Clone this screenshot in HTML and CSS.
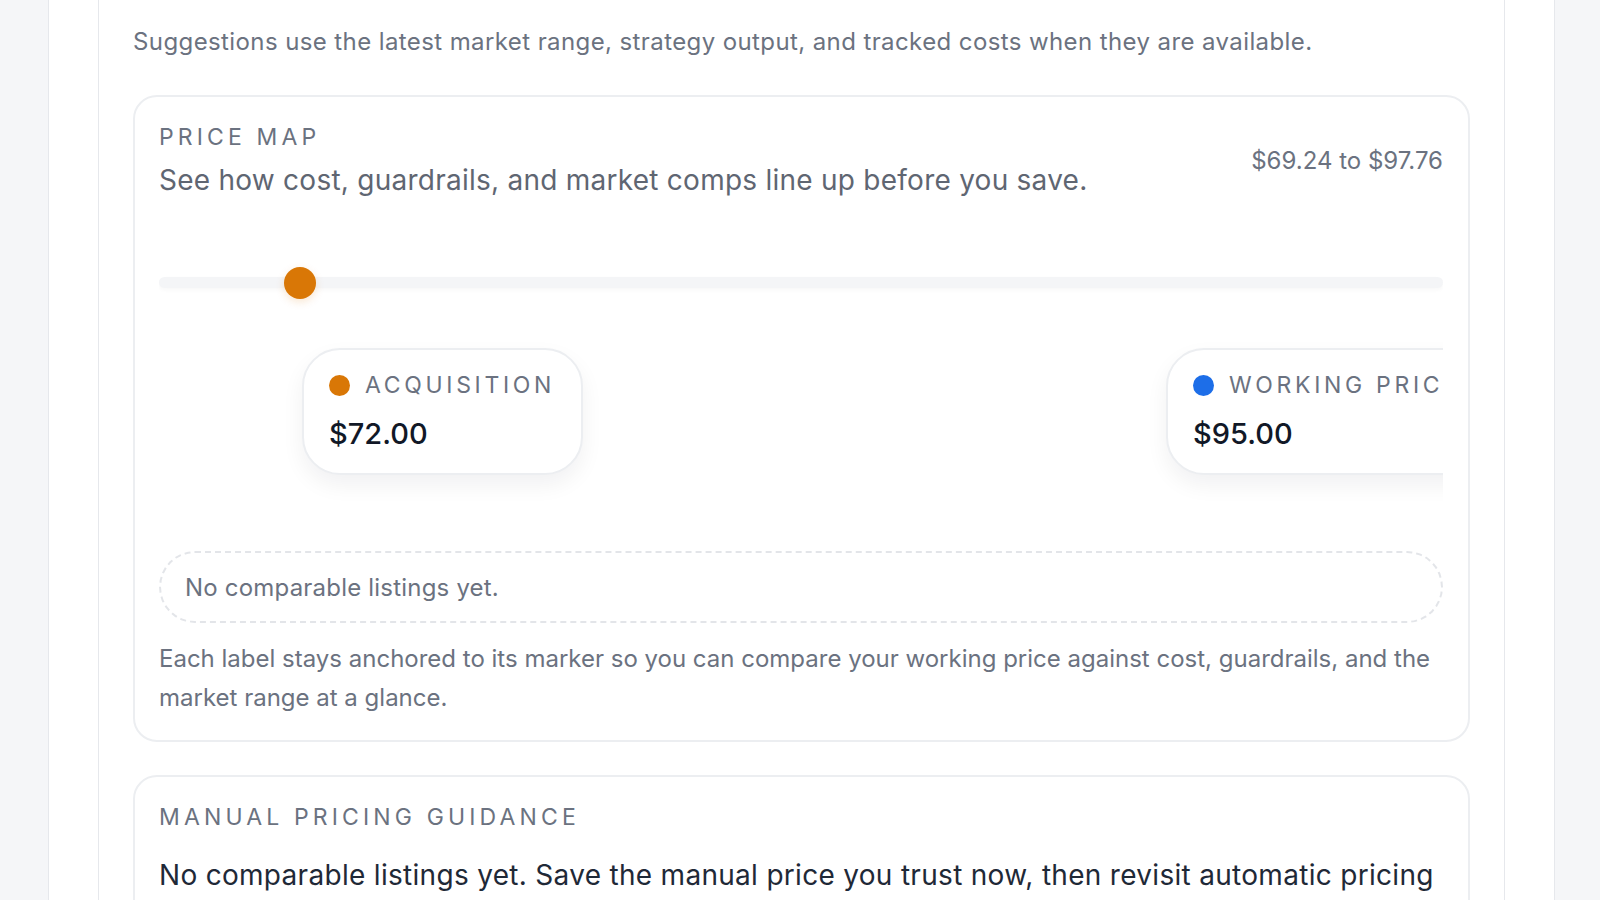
FILE: index.html
```html
<!DOCTYPE html>
<html lang="en">
<head>
<meta charset="utf-8">
<title>Price map</title>
<link rel="stylesheet" href="styles.css">
</head>
<body>
<div class="page">
  <div class="panel">
    <section class="section">
      <p class="intro">Suggestions use the latest market range, strategy output, and tracked costs when they are available.</p>

      <div class="card price-map">
        <div class="map-head">
          <div class="map-titles">
            <div class="eyebrow">Price map</div>
            <div class="map-title">See how cost, guardrails, and market comps line up before you save.</div>
          </div>
          <div class="range">$69.24 to $97.76</div>
        </div>

        <div class="plot">
          <div class="track"></div>
          <div class="marker marker-orange" style="left: 125px"></div>
          <div class="tag" style="left: 143px">
            <div class="tag-label"><span class="dot dot-orange"></span>Acquisition</div>
            <div class="tag-value">$72.00</div>
          </div>
          <div class="tag" style="left: 1007px">
            <div class="tag-label"><span class="dot dot-blue"></span>Working price</div>
            <div class="tag-value">$95.00</div>
          </div>
        </div>

        <div class="empty">No comparable listings yet.</div>
        <p class="note">Each label stays anchored to its marker so you can compare your working price against cost, guardrails, and the market range at a glance.</p>
      </div>

      <div class="card guidance">
        <div class="eyebrow">Manual pricing guidance</div>
        <p class="guidance-text">No comparable listings yet. Save the manual price you trust now, then revisit automatic pricing once market data arrives.</p>
      </div>
    </section>
  </div>
</div>
</body>
</html>
```

FILE: styles.css
```css
* { box-sizing: border-box; }

html, body {
  margin: 0;
  padding: 0;
  height: 100%;
  overflow: hidden;
}

body {
  background: #f5f6f8;
  font-family: Inter, "Noto Sans", "Liberation Sans", sans-serif;
  color: #6b7280;
}

.page {
  padding: 0 45px 0 48px;
  height: 100%;
}

.panel {
  background: #ffffff;
  border-left: 1px solid #e6e8ec;
  border-right: 1px solid #e6e8ec;
  height: 100%;
  padding: 0 49px;
}

.section {
  border-left: 1px solid #e6e8ec;
  border-right: 1px solid #e6e8ec;
  height: 100%;
  padding: 25px 34px 0 34px;
}

.intro {
  margin: 0 0 36px 0;
  font-size: 24px;
  line-height: 34px;
  color: #6b7280;
  letter-spacing: 0.4px;
}

.card {
  border: 2px solid #eceef1;
  border-radius: 24px;
  background: #fff;
  padding: 24px 25px 23px 24px;
}

.map-head {
  display: flex;
  align-items: center;
  justify-content: space-between;
  gap: 24px;
}

.eyebrow {
  font-size: 23px;
  line-height: 32px;
  text-transform: uppercase;
  letter-spacing: 0.18em;
  color: #6b7280;
}

.map-title {
  font-size: 28px;
  line-height: 38px;
  margin-top: 8px;
  letter-spacing: 0.25px;
  color: #5f6672;
}

.range {
  font-size: 24px;
  color: #6b7280;
  margin-top: 0;
}

.plot {
  position: relative;
  height: 300px;
  margin-top: 17px;
  overflow: hidden;
}

.track {
  position: absolute;
  left: 0;
  right: 0;
  top: 61px;
  height: 11px;
  border-radius: 6px;
  background: #f4f5f7;
  box-shadow: 0 2px 4px rgba(0, 0, 0, 0.03);
}

.marker {
  position: absolute;
  top: 51px;
  width: 32px;
  height: 32px;
  border-radius: 50%;
  box-shadow: 0 3px 8px rgba(217, 119, 6, 0.18);
}

.marker-orange { background: #d97706; }

.tag {
  position: absolute;
  top: 132px;
  height: 127px;
  padding: 19px 26px 0 25px;
  border: 2px solid #eceef1;
  border-radius: 38px;
  background: #fff;
  box-shadow: 0 10px 22px rgba(15, 23, 42, 0.06);
  white-space: nowrap;
}

.tag-label {
  display: flex;
  align-items: center;
  font-size: 23px;
  line-height: 32px;
  text-transform: uppercase;
  letter-spacing: 0.16em;
  color: #6b7280;
}

.dot {
  display: inline-block;
  width: 21px;
  height: 21px;
  border-radius: 50%;
  margin-right: 15px;
  flex: none;
}

.dot-orange { background: #d97706; }
.dot-blue { background: #1d6ee8; }

.tag-value {
  margin-top: 15px;
  font-size: 29px;
  line-height: 36px;
  font-weight: 500;
  color: #111827;
}

.empty {
  margin-top: 35px;
  height: 72px;
  display: flex;
  align-items: center;
  padding: 0 24px;
  border: 2px dashed #e3e5e9;
  border-radius: 36px;
  font-size: 24px;
  letter-spacing: 0.2px;
  color: #6b7280;
}

.note {
  margin: 16px 0 0 0;
  font-size: 24px;
  line-height: 39px;
  color: #6b7280;
}

.guidance {
  margin-top: 33px;
  padding-top: 24px;
}

.guidance-text {
  margin: 21px 0 0 0;
  font-size: 28px;
  line-height: 42px;
  letter-spacing: 0.3px;
  color: #1f2937;
}
```
